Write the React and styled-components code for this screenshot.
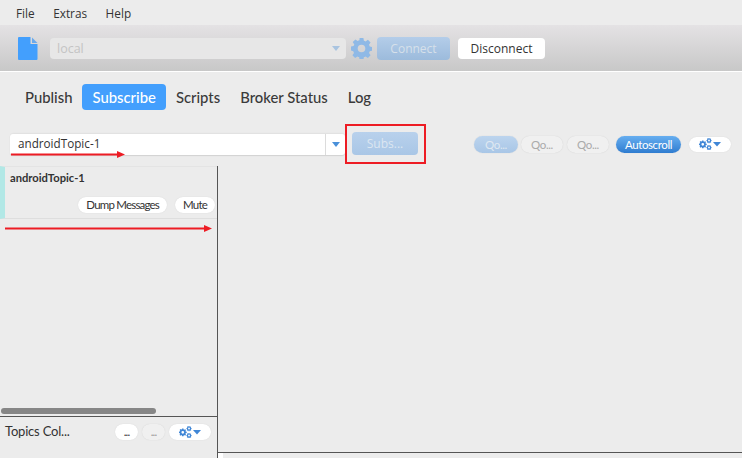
import React from 'react';
import styled, { createGlobalStyle } from 'styled-components';

const Global = createGlobalStyle`
  html, body { margin: 0; padding: 0; background: #ececec; overflow: hidden; }
  * { box-sizing: border-box; }
  #root { font-family: "Lato", "Liberation Sans", sans-serif; }
`;
const Page = styled.div`
  position: relative; width: 742px; height: 458px; background: #ececec; overflow: hidden;
  display: flex; flex-direction: column; color: #333;
`;
const MenuBar = styled.div`
  height: 25px; display: flex; align-items: center; padding: 0 0 0 16px; gap: 18.5px;
  font: 11.8px "Open Sans", "Liberation Sans", sans-serif; color: #333;
`;
const Toolbar = styled.div`
  height: 47px; display: flex; align-items: center; padding: 1px 0 0 18px;
  background: linear-gradient(#e4e2e4, #c8c8c8); border-bottom: 1px solid #fff;
`;
const ProfileSelect = styled.div`
  width: 296px; height: 21px; margin-left: 12px; border-radius: 4px; background: #e7e7e7;
  display: flex; align-items: center; justify-content: space-between; padding: 0 6px 0 7px;
  font: 12.5px "Open Sans", sans-serif; color: #c4c4c4;
`;
const Caret = styled.span`
  width: 0; height: 0; border-left: 4px solid transparent; border-right: 4px solid transparent;
  border-top: 5px solid ${p => p.$color};
`;
const GearWrap = styled.div`
  margin-left: 5px; width: 21px; height: 21px; display: flex;
`;
const ConnectButton = styled.div`
  width: 73px; height: 23px; margin-left: 5px; border-radius: 4px;
  background: linear-gradient(#b4cde9, #9cbbdc);
  display: flex; align-items: center; justify-content: center;
  font: 12px "Open Sans", sans-serif; color: #d6e0ea;
`;
const DisconnectButton = styled.div`
  width: 87px; height: 21px; margin-left: 8px; border-radius: 4px; background: #fff;
  display: flex; align-items: center; justify-content: center;
  font: 12px "Open Sans", sans-serif; color: #333;
`;
const Tabs = styled.div`
  height: 26px; margin: 12px 0 0 15px; display: flex; align-items: center; gap: 0;
`;
const Tab = styled.div`
  height: 26px; padding: 0 10px; border-radius: 4px; display: flex; align-items: center;
  font: 500 14.85px "Lato", sans-serif; white-space: nowrap;
  color: ${p => (p.$active ? '#fff' : '#3a3a3a')};
  background: ${p => (p.$active ? '#439ffd' : 'transparent')};
`;
const SubscribeRow = styled.div`
  height: 23px; margin-top: 22px; padding-left: 10px; display: flex; align-items: center;
`;
const TopicCombo = styled.div`
  width: 335px; height: 21px; margin-top: 2px; display: flex; background: #fff; border-radius: 3px;
  box-shadow: 0 1px 1px #d2d2d2, 0 -1px 1px #e2e2e2;
`;
const TopicInput = styled.div`
  flex: 1; padding: 0 8px 3px; display: flex; align-items: center;
  font: 11.7px "Open Sans", sans-serif; color: #333;
`;
const ComboArrow = styled.div`
  width: 20px; border-left: 1px solid #dcdcdc; display: flex; align-items: center; justify-content: center;
`;
const SubsButton = styled(ConnectButton)`
  width: 66px; margin-left: 7px; background: linear-gradient(#b8d1ec, #a9c6e6); color: #dce6f1;
`;
const Right = styled.div`
  margin-left: auto; margin-right: 11px; display: flex; align-items: center; gap: 4px; padding-top: 1px;
`;
const Pill = styled.div`
  height: ${p => p.$h || 17}px; width: ${p => p.$w}px; border-radius: 9px; display: flex; align-items: center; justify-content: center;
  margin-left: ${p => p.$ml || 0}px;
  font: 11.5px "Lato", sans-serif; letter-spacing: -0.4px;
  color: ${p => p.$color || '#aaa'};
  background: ${p => p.$bg || '#f0f0f0'};
  box-shadow: 0 0 1px #ccc;
`;
const Body = styled.div`
  flex: 1; margin-top: 11px; display: flex; min-height: 0;
`;
const LeftPanel = styled.div`
  width: 218px; border-right: 1px solid #555; display: flex; flex-direction: column;
`;
const TopicList = styled.div`
  flex: 1; position: relative; border-bottom: 1px solid #555;
`;
const TopicItem = styled.div`
  height: 53px; border-left: 5px solid #b2e8e6; border-bottom: 1px solid #dedede; border-top: 1px solid #e4e4e4;
  display: flex; flex-direction: column; padding: 4px 2px 0 5px;
`;
const TopicName = styled.div`
  font: 700 11.2px "Lato", sans-serif; color: #333; line-height: 14px;
`;
const TopicActions = styled.div`
  margin-top: 12px; display: flex; justify-content: flex-end; gap: 8px;
`;
const WhitePill = styled.div`
  height: 16px; padding: 0 8px 1px; border-radius: 9px; background: #fff; display: flex; align-items: center;
  font: 11.5px "Lato", sans-serif; letter-spacing: -0.8px; color: #333; box-shadow: 0 0 1px #ccc;
  width: ${p => p.$w ? p.$w + 'px' : 'auto'}; justify-content: center;
  ${p => p.$off && 'background:#f0f0f0; color:#999;'}
`;
const ScrollThumb = styled.div`
  position: absolute; left: 1px; bottom: 2px; width: 155px; height: 6px; border-radius: 3px; background: #868686;
`;
const Footer = styled.div`
  height: 41px; display: flex; align-items: flex-start; padding: 7px 6px 0 5px;
`;
const FooterTitle = styled.div`
  font: 13px "Lato", sans-serif; letter-spacing: -0.2px; color: #333; width: 110px; line-height: 15px;
`;
const FooterActions = styled.div`
  display: flex; gap: 4px;
`;
const RightColumn = styled.div`
  flex: 1; display: flex; flex-direction: column;
`;
const Content = styled.div`
  flex: 1; border-bottom: 1px solid #555;
`;
const ContentFoot = styled.div`
  width: 5px; height: 5px; background: #fff;
`;
const RedBox = styled.div`
  position: absolute; left: 345px; top: 124px; width: 81px; height: 40px; border: 2px solid #ed1c24;
`;
const ArrowSvg = styled.svg`
  position: absolute; overflow: visible;
`;

const gearPath = 'M8.6 0h3.8l.5 2.7c.6.2 1.2.4 1.7.7l2.3-1.6 2.7 2.7-1.6 2.3c.3.5.5 1.1.7 1.7l2.7.5v3.8l-2.7.5c-.2.6-.4 1.2-.7 1.7l1.6 2.3-2.7 2.7-2.3-1.6c-.5.3-1.1.5-1.7.7l-.5 2.7H8.6l-.5-2.7c-.6-.2-1.2-.4-1.7-.7l-2.3 1.6-2.7-2.7 1.6-2.3c-.3-.5-.5-1.1-.7-1.7L-.1 12.4V8.6l2.7-.5c.2-.6.4-1.2.7-1.7L1.7 4.1l2.7-2.7 2.3 1.6c.5-.3 1.1-.5 1.7-.7z';

const Gear = ({ size = 21, color = '#8fb9e6' }) => (
  <svg width={size} height={size} viewBox="0 0 21 21">
    <path fillRule="evenodd" fill={color} d={`${gearPath} M10.5 6.7a3.8 3.8 0 1 0 0 7.6 3.8 3.8 0 0 0 0-7.6z`} />
  </svg>
);

const GearMenu = () => (
  <svg width="22" height="12" viewBox="0 0 22 12">
    <g transform="translate(0 2.5) scale(.36)"><path fillRule="evenodd" fill="#3f86d6" d={`${gearPath} M10.5 6.7a3.8 3.8 0 1 0 0 7.6 3.8 3.8 0 0 0 0-7.6z`} /></g>
    <g transform="translate(7.5 0) scale(.24)"><path fillRule="evenodd" fill="#3f86d6" d={`${gearPath} M10.5 6.7a3.8 3.8 0 1 0 0 7.6 3.8 3.8 0 0 0 0-7.6z`} /></g>
    <g transform="translate(7.5 7) scale(.24)"><path fillRule="evenodd" fill="#3f86d6" d={`${gearPath} M10.5 6.7a3.8 3.8 0 1 0 0 7.6 3.8 3.8 0 0 0 0-7.6z`} /></g>
    <path fill="#3f86d6" d="M14 4h8l-4 4.5z" />
  </svg>
);

const FileIcon = () => (
  <svg width="20" height="23" viewBox="0 0 20 23">
    <path fill="#439ffd" d="M0 1a1 1 0 0 1 1-1h11.5v7H19.5v15a1 1 0 0 1-1 1H1a1 1 0 0 1-1-1z" />
    <path fill="#6aa9ec" d="M14 0.5 19.5 6H14z" />
  </svg>
);

const Arrow = ({ x, y, w }) => (
  <ArrowSvg style={{ left: x, top: y }} width={w} height="8" viewBox={`0 0 ${w} 8`}>
    <path d={`M0 3.5H${w - 6}`} stroke="#ed1c24" strokeWidth="2" />
    <path d={`M${w - 8} 0L${w} 3.5L${w - 8} 7z`} fill="#ed1c24" />
  </ArrowSvg>
);

export default function App() {
  return (
    <Page>
      <Global />
      <MenuBar><span>File</span><span>Extras</span><span>Help</span></MenuBar>
      <Toolbar>
        <FileIcon />
        <ProfileSelect>local<Caret $color="#a9c4e0" /></ProfileSelect>
        <GearWrap><Gear /></GearWrap>
        <ConnectButton>Connect</ConnectButton>
        <DisconnectButton>Disconnect</DisconnectButton>
      </Toolbar>
      <Tabs>
        <Tab>Publish</Tab>
        <Tab $active>Subscribe</Tab>
        <Tab>Scripts</Tab>
        <Tab>Broker Status</Tab>
        <Tab>Log</Tab>
      </Tabs>
      <SubscribeRow>
        <TopicCombo>
          <TopicInput>androidTopic-1</TopicInput>
          <ComboArrow><Caret $color="#4a90d9" /></ComboArrow>
        </TopicCombo>
        <SubsButton>Subs...</SubsButton>
        <Right>
          <Pill $w={44} $bg="linear-gradient(#bcd4ee,#a8c6e6)" $color="#dfe8f1">Qo...</Pill>
          <Pill $w={42} $ml={-1}>Qo...</Pill>
          <Pill $w={42}>Qo...</Pill>
          <Pill $w={65} $ml={3} $bg="linear-gradient(#66aef0,#2f7cd0)" $color="#fff">Autoscroll</Pill>
          <Pill $w={42} $h={15} $ml={4} $bg="#fff"><GearMenu /></Pill>
        </Right>
      </SubscribeRow>
      <Body>
        <LeftPanel>
          <TopicList>
            <TopicItem>
              <TopicName>androidTopic-1</TopicName>
              <TopicActions>
                <WhitePill>Dump Messages</WhitePill>
                <WhitePill>Mute</WhitePill>
              </TopicActions>
            </TopicItem>
            <ScrollThumb />
          </TopicList>
          <Footer>
            <FooterTitle>Topics Col...</FooterTitle>
            <FooterActions>
              <WhitePill $w={23}>...</WhitePill>
              <WhitePill $w={23} $off>...</WhitePill>
              <WhitePill $w={42}><GearMenu /></WhitePill>
            </FooterActions>
          </Footer>
        </LeftPanel>
        <RightColumn>
          <Content />
          <ContentFoot />
        </RightColumn>
      </Body>
      <RedBox />
      <Arrow x={11} y={151} w={114} />
      <Arrow x={5} y={224.5} w={207} />
    </Page>
  );
}
